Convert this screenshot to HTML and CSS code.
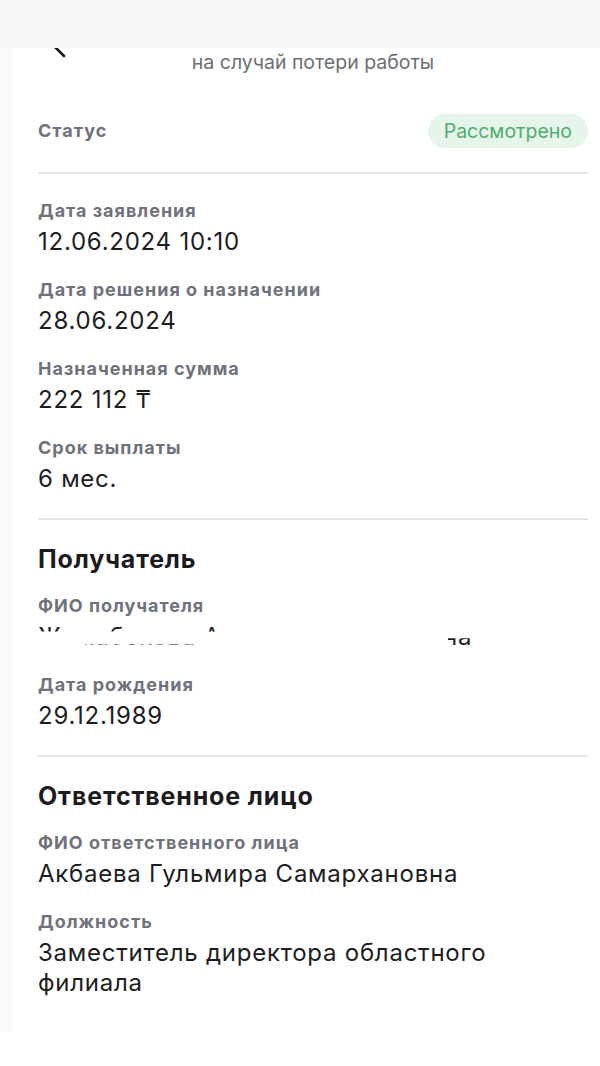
FILE: index.html
```html
<!DOCTYPE html>
<html lang="ru">
<head>
<meta charset="utf-8">
<link rel="stylesheet" href="styles.css">
</head>
<body>
<div class="topbar"></div>
<div class="page">
<main class="card">
  <header class="head">
    <svg class="back" width="16" height="14" viewBox="0 0 16 14"><line x1="3" y1="0" x2="12" y2="9" stroke="#1a1a1a" stroke-width="2.6" stroke-linecap="round"/></svg>
    <div class="subtitle">на случай потери работы</div>
  </header>

  <div class="status-row">
    <span class="label">Статус</span>
    <span class="badge">Рассмотрено</span>
  </div>
  <div class="divider"></div>

  <section class="section first">
    <div class="field">
      <div class="label">Дата заявления</div>
      <div class="value">12.06.2024 10:10</div>
    </div>
    <div class="field">
      <div class="label">Дата решения о назначении</div>
      <div class="value">28.06.2024</div>
    </div>
    <div class="field">
      <div class="label">Назначенная сумма</div>
      <div class="value">222 112 ₸</div>
    </div>
    <div class="field">
      <div class="label">Срок выплаты</div>
      <div class="value">6 мес.</div>
    </div>
  </section>
  <div class="divider"></div>

  <section class="section">
    <h2 class="heading">Получатель</h2>
    <div class="field">
      <div class="label">ФИО получателя</div>
      <div class="value redacted">
        <span class="frag frag-top">Жумабекова Акбота Бекболатовна</span>
        <span class="frag frag-low">Жумабекова Акбота Бекболатовна</span>
        <span class="frag frag-end">Жумабекова Акбота Бекболатовна</span>
      </div>
    </div>
    <div class="field">
      <div class="label">Дата рождения</div>
      <div class="value">29.12.1989</div>
    </div>
  </section>
  <div class="divider"></div>

  <section class="section">
    <h2 class="heading">Ответственное лицо</h2>
    <div class="field">
      <div class="label">ФИО ответственного лица</div>
      <div class="value">Акбаева Гульмира Самархановна</div>
    </div>
    <div class="field">
      <div class="label">Должность</div>
      <div class="value wrap">Заместитель директора областного филиала</div>
    </div>
  </section>
</main>
</div>
</body>
</html>
```
FILE: styles.css
```css
* { box-sizing: border-box; }
html, body { margin: 0; }
body {
  background: #ffffff;
  font-family: Inter, "Noto Sans", sans-serif;
  color: #1d1d1f;
  width: 600px;
  min-height: 1066px;
  overflow: hidden;
}
.topbar {
  height: 48px;
  background: #f5f6f8;
  position: relative;
  z-index: 2;
}
.page {
  background: #f9f9fa;
  padding-left: 12px;
}
.card {
  background: #ffffff;
  padding: 0 12px 34px 26px;
}
.head {
  position: relative;
  height: 28px;
}
.back {
  position: absolute;
  left: 14px;
  top: -1px;
}
.subtitle {
  text-align: center;
  font-size: 19.5px;
  line-height: 28px;
  color: #6c6e75;
}
.status-row {
  margin-top: 38px;
  height: 34px;
  display: flex;
  align-items: center;
  justify-content: space-between;
}
.badge {
  height: 34px;
  line-height: 34px;
  padding: 0 16px;
  border-radius: 17px;
  background: #e6f5ea;
  color: #4fae6c;
  font-size: 19.5px;
}
.divider {
  height: 2px;
  background: #e4e4e6;
  margin-top: 24px;
}
.section { padding-top: 24px; }
.section.first { padding-top: 27px; }
.heading {
  margin: 0 0 22px;
  font-size: 25px;
  line-height: 30px;
  font-weight: 700;
  letter-spacing: 0.85px;
  color: #1b1b1d;
}
.field + .field { margin-top: 23px; }
.label {
  font-size: 18px;
  line-height: 20px;
  font-weight: 700;
  letter-spacing: 1px;
  color: #6f727c;
}
.field .label { margin-bottom: 6px; }
.value {
  font-size: 24px;
  line-height: 30px;
  letter-spacing: 0.75px;
  color: #1d1d1f;
}
.value.wrap { max-width: 500px; }
.redacted {
  position: relative;
  height: 30px;
}
.frag {
  position: absolute;
  left: 0;
  top: 0;
  white-space: nowrap;
}
.frag-top { clip-path: inset(0 calc(100% - 180px) 68% 0); }
.frag-low { clip-path: inset(74% calc(100% - 157px) 6% 47px); color: #555; }
.frag-end { clip-path: inset(54% 0 20% 410px); }
```
